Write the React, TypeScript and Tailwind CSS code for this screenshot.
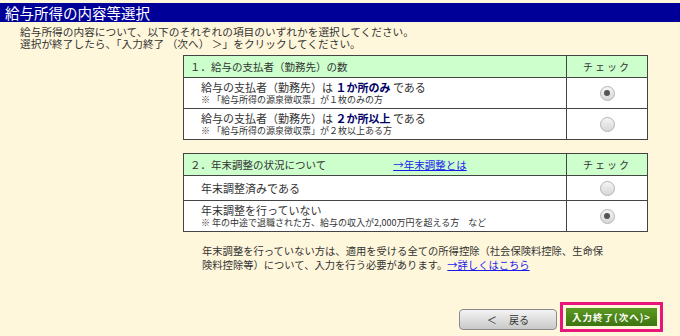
import React from 'react'

const FONT = { fontFamily: '"Noto Sans CJK JP", "Noto Sans", sans-serif' }

function Radio({ checked }: { checked?: boolean }) {
  return (
    <span className="flex h-[15px] w-[15px] items-center justify-center rounded-full border border-[#b4b4b4] bg-gradient-to-b from-[#f6f6f6] to-[#d6d6d6]">
      {checked && <span className="h-[6px] w-[6px] rounded-full bg-[#555]" />}
    </span>
  )
}

function Row({ main, note, checked, h }: { main: React.ReactNode; note?: string; checked?: boolean; h: string }) {
  return (
    <div className={`grid grid-cols-[383px_1fr] border-t border-[#444] bg-white ${h}`}>
      <div className="flex flex-col justify-center border-r border-[#444] pl-[17px]">
        <p className="whitespace-nowrap text-[11px] leading-[13px] text-[#333]">{main}</p>
        {note && <p className="whitespace-nowrap text-[9px] leading-[11px] text-[#333]">{note}</p>}
      </div>
      <div className="flex items-center justify-center">
        <Radio checked={checked} />
      </div>
    </div>
  )
}

function Header({ children }: { children: React.ReactNode }) {
  return (
    <div className="grid h-[21px] grid-cols-[383px_1fr] bg-[#ccffcc] leading-[13px]">
      <div className="flex items-center whitespace-nowrap border-r border-[#444] pl-[6px] text-[10.5px] text-[#333]">{children}</div>
      <div className="flex items-center justify-center text-[10px] tracking-[2px] text-[#333]">チェック</div>
    </div>
  )
}

export default function App() {
  return (
    <div className="h-[336px] w-[680px] overflow-hidden bg-[#fff7db] pt-[3px]" style={FONT}>
      <div className="flex h-[19px] items-center bg-[#000099] pl-[5px] text-[14.5px] leading-[16px] text-white">給与所得の内容等選択</div>

      <div className="pl-[20px] pt-[4px] text-[10.7px] leading-[12px] text-[#333]">
        <p>給与所得の内容について、以下のそれぞれの項目のいずれかを選択してください。</p>
        <p>選択が終了したら、「入力終了 （次へ） ＞」をクリックしてください。</p>
      </div>

      <div className="ml-[183px] mt-[5px] w-[465px]">
        {/* 1 */}
        <div className="border border-[#444]">
          <Header>１．給与の支払者（勤務先）の数</Header>
          <Row
            h="h-[31px]"
            checked
            main={<>給与の支払者（勤務先）は <b className="text-[#000066]">１か所のみ</b> である</>}
            note="※ 「給与所得の源泉徴収票」が１枚のみの方"
          />
          <Row
            h="h-[31px]"
            main={<>給与の支払者（勤務先）は <b className="text-[#000066]">２か所以上</b> である</>}
            note="※ 「給与所得の源泉徴収票」が２枚以上ある方"
          />
        </div>

        {/* 2 */}
        <div className="mt-[13px] border border-[#444]">
          <Header>
            <span>２．年末調整の状況について</span>
            <a className="ml-[67px] text-[#1a1aee] underline">→年末調整とは</a>
          </Header>
          <Row h="h-[25px]" main="年末調整済みである" />
          <Row
            h="h-[31px]"
            checked
            main="年末調整を行っていない"
            note="※ 年の中途で退職された方、給与の収入が2,000万円を超える方　など"
          />
        </div>

        <div className="ml-[19px] mt-[12px] w-[420px] text-[10.3px] leading-[14px] text-[#333]">
          <p className="whitespace-nowrap">年末調整を行っていない方は、適用を受ける全ての所得控除（社会保険料控除、生命保</p>
          <p className="whitespace-nowrap">
            険料控除等）について、入力を行う必要があります。<a className="text-[#1a1aee] underline">→詳しくはこちら</a>
          </p>
        </div>
      </div>

      <div className="mt-[30px] flex items-end justify-end gap-[3px] pr-[17px]">
        <button className="mb-[2px] flex h-[21px] w-[98px] items-center justify-center gap-[12px] rounded-[4px] border border-[#8a8a8a] bg-gradient-to-b from-[#f4f4f4] to-[#c9c9c9] text-[10px] leading-[12px] text-[#333]">
          <span>＜</span>
          <span>戻る</span>
        </button>
        <div className="border-[3px] border-[#e8157a] p-[3px]">
          <button className="flex h-[18px] w-[91px] items-center justify-center bg-gradient-to-b from-[#5c9a22] to-[#3d7410] text-[9.5px] font-bold leading-[12px] tracking-[1px] text-white">
            入力終了(次へ)&gt;
          </button>
        </div>
      </div>
    </div>
  )
}
